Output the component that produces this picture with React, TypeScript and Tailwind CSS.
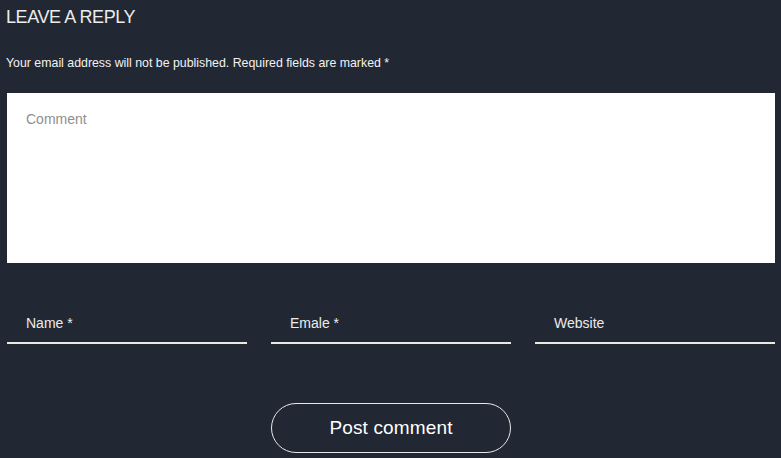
import React from "react";

export default function App() {
  const font = { fontFamily: '"Liberation Sans", Arial, sans-serif' };
  return (
    <div className="w-[781px] h-[458px] bg-[#222833] overflow-hidden" style={font}>
      <div className="pl-[6px] pt-[6px]">
        <h2 className="text-[18px] leading-[22px] font-normal text-[#ececec] tracking-[-0.4px]">LEAVE A REPLY</h2>
        <p className="mt-[27px] text-[12.35px] leading-[17px] text-[#f2f2f2]">
          Your email address will not be published. Required fields are marked *
        </p>
      </div>
      <div className="w-[768px] ml-[7px]">
        <textarea
          placeholder="Comment"
          className="mt-[21px] block w-full h-[170px] bg-white resize-none outline-none pt-[16px] pl-[19px] text-[14px] leading-[20px] text-[#333] placeholder:text-[#8f8f8f]"
          style={font}
        />
        <div className="mt-[40px] grid grid-cols-3 gap-[24px]">
          {["Name *", "Emale *", "Website"].map((p) => (
            <input
              key={p}
              placeholder={p}
              className="h-[41px] w-full bg-transparent border-b-2 border-[#ece9e2] outline-none pl-[19px] text-[14px] text-white placeholder:text-[#ebebeb]"
              style={font}
            />
          ))}
        </div>
        <div className="mt-[59px] flex justify-center">
          <button
            className="w-[240px] h-[50px] rounded-full border border-[#e8e8e8] text-[19px] text-white bg-transparent tracking-[0.15px]"
            style={font}
          >
            Post comment
          </button>
        </div>
      </div>
    </div>
  );
}
